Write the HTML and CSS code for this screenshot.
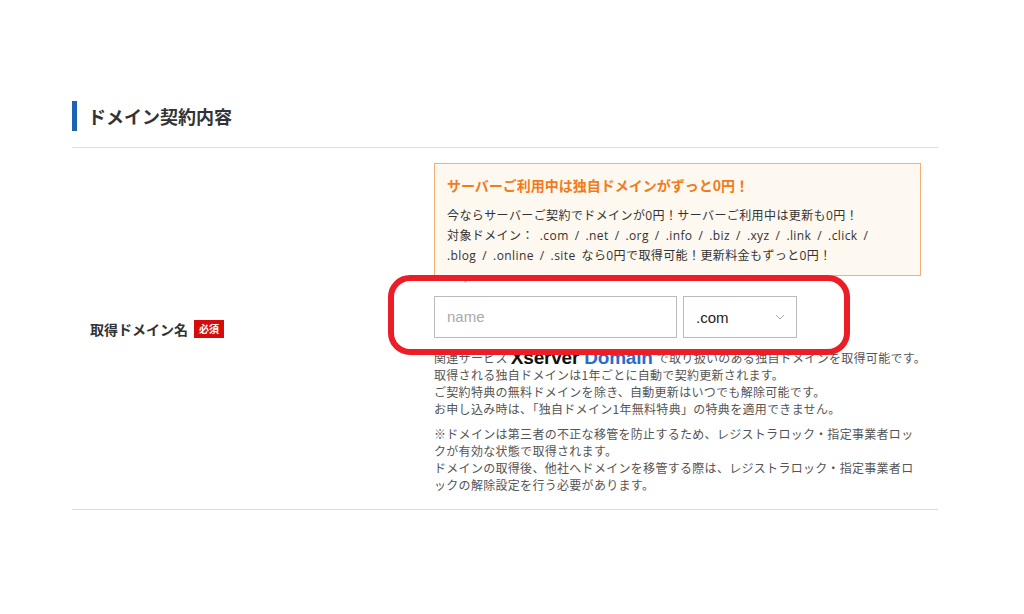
FILE: index.html
```html
<!DOCTYPE html>
<html lang="ja">
<head>
<meta charset="utf-8">
<link rel="stylesheet" href="styles.css">
</head>
<body>
<main class="page">
  <h2 class="heading">ドメイン契約内容</h2>
  <div class="row">
    <div class="label">
      <span class="label-text">取得ドメイン名</span>
      <span class="badge">必須</span>
    </div>
    <div class="field">
      <div class="promo">
        <p class="promo-title">サーバーご利用中は独自ドメインがずっと0円！</p>
        <p class="promo-body">今ならサーバーご契約でドメインが0円！サーバーご利用中は更新も0円！<br>対象ドメイン： .com / .net / .org / .info / .biz / .xyz / .link / .click /<br>.blog / .online / .site なら0円で取得可能！更新料金もずっと0円！</p>
      </div>
      <div class="inputs">
        <div class="text-input">name</div>
        <div class="select">
          <span>.com</span>
          <svg class="chev" width="10" height="6" viewBox="0 0 10 6"><path d="M1 1 L5 5 L9 1" fill="none" stroke="#aaa" stroke-width="1"/></svg>
        </div>
      </div>
      <p class="note">関連サービス<span class="logo"><b class="logo-x">Xserver</b> <b class="logo-d">Domain</b></span>で取り扱いのある独自ドメインを取得可能です。<br>取得される独自ドメインは1年ごとに自動で契約更新されます。<br>ご契約特典の無料ドメインを除き、自動更新はいつでも解除可能です。<br>お申し込み時は、「独自ドメイン1年無料特典」の特典を適用できません。</p>
      <p class="note note2">※ドメインは第三者の不正な移管を防止するため、レジストラロック・指定事業者ロッ<br>クが有効な状態で取得されます。<br>ドメインの取得後、他社へドメインを移管する際は、レジストラロック・指定事業者ロ<br>ックの解除設定を行う必要があります。</p>
      <div class="highlight"></div>
    </div>
  </div>
</main>
</body>
</html>
```
FILE: styles.css
```css
html, body {
  margin: 0;
  padding: 0;
  background: #fff;
}
body {
  font-family: "Noto Sans CJK JP", "Noto Sans", sans-serif;
  color: #333;
}
.page {
  width: 866px;
  margin-left: 72px;
  padding-top: 101px;
}
.heading {
  margin: 0;
  height: 30px;
  line-height: 30px;
  border-left: 5px solid #1d62b3;
  padding-left: 11px;
  font-size: 18px;
  font-weight: bold;
  color: #333;
  margin-bottom: 16px;
}
.row {
  display: flex;
  border-top: 1px solid #ddd;
  border-bottom: 1px solid #ddd;
  padding: 15px 0 16px;
}
.label {
  width: 362px;
  padding-left: 18px;
  box-sizing: border-box;
  display: flex;
  align-items: center;
  gap: 6px;
  padding-top: 2px;
}
.label-text {
  font-size: 14px;
  font-weight: bold;
  color: #333;
}
.badge {
  background: #d60c0c;
  color: #fff;
  font-size: 10px;
  font-weight: bold;
  padding: 0 5px;
  height: 18px;
  line-height: 18px;
}
.field {
  position: relative;
  width: 488px;
}
.promo {
  position: relative;
  background: #fdf8f0;
  border: 1px solid #f5ae74;
  padding: 10px 12px 9px;
  width: 487px;
  box-sizing: border-box;
}
.promo::after {
  content: "";
  position: absolute;
  left: 26px;
  bottom: -6px;
  width: 8px;
  height: 8px;
  background: #fdf8f0;
  border-right: 1px solid #f5ae74;
  border-bottom: 1px solid #f5ae74;
  transform: rotate(45deg);
}
.promo-title {
  margin: 0 0 10px;
  font-size: 14px;
  line-height: 22px;
  font-weight: bold;
  color: #f27b1c;
}
.promo-body {
  margin: 0;
  font-family: "Open Sans", "Noto Sans CJK JP", sans-serif;
  font-size: 12px;
  line-height: 20px;
  color: #333;
  letter-spacing: 0.4px;
  word-spacing: 2.5px;
  white-space: nowrap;
}
.inputs {
  display: flex;
  gap: 6px;
  margin-top: 20px;
}
.text-input {
  width: 243px;
  height: 42px;
  box-sizing: border-box;
  border: 1px solid #bbb;
  padding-left: 12px;
  line-height: 40px;
  font-family: "Liberation Sans", Arial, sans-serif;
  font-size: 15px;
  color: #aaa;
}
.select {
  width: 114px;
  height: 42px;
  box-sizing: border-box;
  border: 1px solid #bbb;
  padding: 0 11px 0 12px;
  display: flex;
  align-items: center;
  justify-content: space-between;
  font-family: "Liberation Sans", Arial, sans-serif;
  font-size: 15px;
  color: #222;
}
.note {
  margin: 11px 0 0;
  font-size: 12px;
  line-height: 17px;
  color: #555;
  letter-spacing: 0.3px;
  white-space: nowrap;
}
.note2 {
  margin-top: 8px;
}
.logo {
  font-family: "Liberation Sans", Arial, sans-serif;
  font-size: 19px;
  line-height: 0;
  margin: 0 4px 0 3px;
  letter-spacing: -0.2px;
  vertical-align: -1px;
}
.logo-x {
  color: #111;
}
.logo-d {
  color: #2a6dc9;
}
.highlight {
  position: absolute;
  left: -46px;
  top: 112px;
  width: 462px;
  height: 80px;
  box-sizing: border-box;
  border: 6px solid #ec1d27;
  border-radius: 22px;
}
```
